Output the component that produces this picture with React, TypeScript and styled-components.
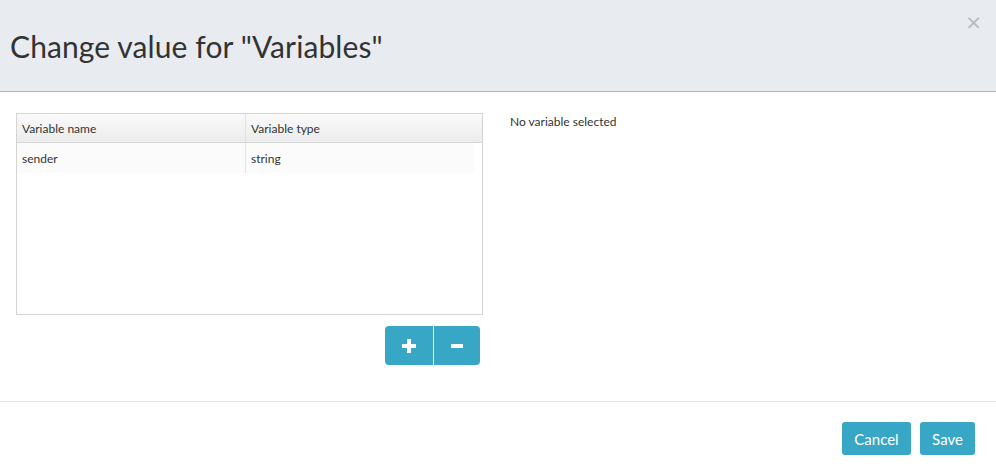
import * as React from 'react'
import styled, { createGlobalStyle } from 'styled-components'

const GlobalStyle = createGlobalStyle`
  html, body {
    margin: 0;
    padding: 0;
    background: #ffffff;
    font-family: Lato, 'Open Sans', sans-serif;
    color: #333333;
  }
`

const Modal = styled.div`
  width: 996px;
  height: 474px;
  display: flex;
  flex-direction: column;
  background: #ffffff;
`

const Header = styled.div`
  position: relative;
  height: 91px;
  background: #e8ecf0;
  border-bottom: 1px solid #a7b2c2;
  display: flex;
  align-items: center;
  padding-left: 10px;
`

const Title = styled.h1`
  margin: 0;
  margin-top: 1px;
  font-size: 30px;
  font-weight: 400;
  color: #333333;
  letter-spacing: 0.1px;
`

const Close = styled.button`
  position: absolute;
  top: 12px;
  right: 14px;
  border: 0;
  background: none;
  padding: 0;
  color: #b4b8bc;
  font-size: 20px;
  line-height: 20px;
  font-family: 'DejaVu Sans', sans-serif;
  cursor: pointer;
`

const Body = styled.div`
  display: flex;
  padding: 21px 16px 0;
  gap: 27px;
  height: 288px;
  border-bottom: 1px solid #e5e5e5;
`

const LeftCol = styled.div`
  width: 467px;
  display: flex;
  flex-direction: column;
`

const Grid = styled.div`
  height: 200px;
  border: 1px solid #d4d4d4;
  background: #ffffff;
`

const Row = styled.div<{ $head?: boolean }>`
  display: grid;
  grid-template-columns: 229px 228px;
  height: ${(p) => (p.$head ? '28px' : '30px')};
  background: ${(p) =>
    p.$head ? 'linear-gradient(#fafafa, #ececec)' : '#fbfbfb'};
  border-bottom: ${(p) => (p.$head ? '1px solid #d4d4d4' : '0')};
  width: ${(p) => (p.$head ? 'auto' : '457px')};
`

const Cell = styled.div<{ $first?: boolean }>`
  display: flex;
  align-items: center;
  padding-left: 5px;
  font-size: 12px;
  color: #333333;
  border-right: ${(p) => (p.$first ? '1px solid #e2e2e2' : '0')};
`

const BtnGroup = styled.div`
  display: flex;
  justify-content: flex-end;
  margin-top: 11px;
  padding-right: 3px;
`

const IconBtn = styled.button<{ $pos: 'left' | 'right' }>`
  width: ${(p) => (p.$pos === 'left' ? '48px' : '47px')};
  height: 39px;
  border: 0;
  background: #38a7c5;
  color: #ffffff;
  display: flex;
  align-items: center;
  justify-content: center;
  border-radius: ${(p) => (p.$pos === 'left' ? '4px 0 0 4px' : '0 4px 4px 0')};
  border-left: ${(p) => (p.$pos === 'right' ? '1px solid #ffffff' : '0')};
  padding: 0;
`

const Info = styled.div`
  font-size: 12px;
  color: #333333;
  padding-top: 1px;
`

const Footer = styled.div`
  display: flex;
  justify-content: flex-end;
  gap: 9px;
  padding: 20px 21px 0 0;
`

const ActionBtn = styled.button<{ $w: number }>`
  width: ${(p) => p.$w}px;
  height: 33px;
  border: 0;
  border-radius: 3px;
  background: #38a7c5;
  color: #ffffff;
  font-family: Lato, sans-serif;
  font-size: 15px;
  padding: 0;
`

export default function App() {
  return (
    <Modal>
      <GlobalStyle />
      <Header>
        <Title>Change value for "Variables"</Title>
        <Close aria-label="close">×</Close>
      </Header>
      <Body>
        <LeftCol>
          <Grid>
            <Row $head>
              <Cell $first>Variable name</Cell>
              <Cell>Variable type</Cell>
            </Row>
            <Row>
              <Cell $first>sender</Cell>
              <Cell>string</Cell>
            </Row>
          </Grid>
          <BtnGroup>
            <IconBtn $pos="left">
              <svg width="14" height="14" viewBox="0 0 14 14">
                <rect x="5" y="0" width="4" height="14" fill="#fff" />
                <rect x="0" y="5" width="14" height="4" fill="#fff" />
              </svg>
            </IconBtn>
            <IconBtn $pos="right">
              <svg width="12" height="4" viewBox="0 0 12 4">
                <rect x="0" y="0" width="12" height="4" fill="#fff" />
              </svg>
            </IconBtn>
          </BtnGroup>
        </LeftCol>
        <Info>No variable selected</Info>
      </Body>
      <Footer>
        <ActionBtn $w={69}>Cancel</ActionBtn>
        <ActionBtn $w={55}>Save</ActionBtn>
      </Footer>
    </Modal>
  )
}
